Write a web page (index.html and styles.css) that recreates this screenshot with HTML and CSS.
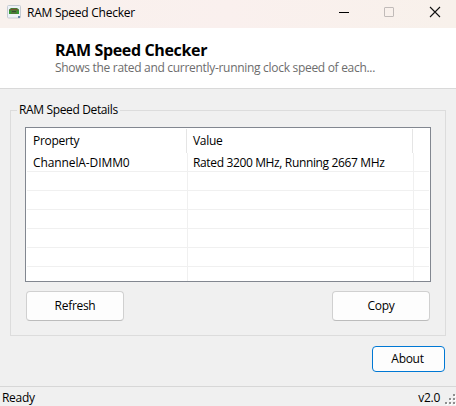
FILE: index.html
```html
<!DOCTYPE html>
<html lang="en">
<head>
    <meta charset="UTF-8">
    <meta name="viewport" content="width=device-width, initial-scale=1.0">
    <title>RAM Speed Checker</title>

    <link rel="stylesheet" href="styles.css">
</head>

<body>

    <div class="window">

        <div class="titlebar">
            <svg class="app-icon" width="14" height="14" viewBox="0 0 14 14">
                <rect x="0.5" y="0.5" width="13" height="12.5" rx="1" fill="#edf2f7" stroke="#c5cbd2"/>
                <path d="M2 4.5L4 3h6l2 1.5V9H2z" fill="#4c7a36"/>
                <path d="M2 6h2v3H2zM10 6h2v3h-2z" fill="#2f9a33"/>
                <path d="M4 4h6v1H4z" fill="#795331"/>
                <path d="M5 6h4v1H5z" fill="#334b35"/>
                <path d="M11 11h2v2h-2z" fill="#6687a8"/>
            </svg>
            <span class="titlebar-text">RAM Speed Checker</span>
            <div class="window-controls">
                <svg width="46" height="28" viewBox="0 0 46 28">
                    <path d="M18 12.5h10" stroke="#000"/>
                </svg>
                <svg width="46" height="28" viewBox="0 0 46 28">
                    <rect x="17.5" y="7.5" width="9" height="9" rx="0.5" fill="none" stroke="#c1bbb9"/>
                </svg>
                <svg width="43" height="28" viewBox="0 0 43 28">
                    <path d="M17 7l10 10M27 7L17 17" stroke="#111" stroke-width="1.1"/>
                </svg>
            </div>
        </div>

        <div class="header">
            <h1>RAM Speed Checker</h1>
            <p>Shows the rated and currently-running clock speed of each...</p>
        </div>

        <div class="content">
            <fieldset class="group">
                <legend>RAM Speed Details</legend>

                <div class="list">
                    <div class="row list-head">
                        <span class="property">Property</span>
                        <span class="value">Value</span>
                    </div>
                    <div class="row">
                        <span class="property dimm">ChannelA-DIMM0</span>
                        <span class="value speed">Rated 3200 MHz, Running 2667 MHz</span>
                    </div>
                    <div class="row"><span class="property"></span><span class="value"></span></div>
                    <div class="row"><span class="property"></span><span class="value"></span></div>
                    <div class="row"><span class="property"></span><span class="value"></span></div>
                    <div class="row"><span class="property"></span><span class="value"></span></div>
                    <div class="row"><span class="property"></span><span class="value"></span></div>
                    <div class="row last"><span class="property"></span><span class="value"></span></div>
                </div>

                <div class="buttons-container">
                    <button type="button">Refresh</button>
                    <button type="button">Copy</button>
                </div>
            </fieldset>

            <button type="button" class="about-btn">About</button>
        </div>

        <div class="statusbar">
            <span>Ready</span>
            <span class="version">v2.0</span>
            <!-- Resize grip -->
            <svg width="14" height="16" viewBox="0 0 14 16">
                <path d="M11 4h2v2h-2zM7 8h2v2H7zM11 8h2v2h-2zM3 12h2v2H3zM7 12h2v2H7zM11 12h2v2h-2z" fill="#fff" transform="translate(1 1)"/>
                <path d="M11 4h2v2h-2zM7 8h2v2H7zM11 8h2v2h-2zM3 12h2v2H3zM7 12h2v2H7zM11 12h2v2h-2z" fill="#8f8f8f"/>
            </svg>
        </div>

    </div>

</body>
</html>
```

FILE: styles.css
```css
* {
    box-sizing: border-box;
}

body {
    margin: 0;
    background-color: #f0f0f0;
    color: #000;
    font-family: 'Open Sans', 'Noto Sans', sans-serif;
    font-size: 12px;
    line-height: 16px;
    letter-spacing: -0.3px;
}

.window {
    display: flex;
    flex-direction: column;
    width: 456px;
    height: 406px;
    overflow: hidden;
    white-space: nowrap;
}

/* Title bar */
.titlebar {
    display: flex;
    height: 28px;
    padding-left: 7px;
    background: linear-gradient(90deg, #f8f1ed, #faf0ee 50%, #f8f1eb);
}

.app-icon {
    margin-top: 5px;
}

.titlebar-text {
    margin: 5px 0 0 6px;
    letter-spacing: -0.25px;
}

.window-controls {
    display: flex;
    margin-left: auto;
    height: 28px;
}

/* Heading */
.header {
    height: 61px;
    padding: 12px 0 0 55px;
    background-color: #fff;
    border-bottom: 1px solid #d9d9d9;
}

.header h1 {
    margin: 0;
    font-size: 16px;
    font-weight: bold;
    line-height: 20px;
    letter-spacing: -0.35px;
}

.header p {
    margin: 0;
    color: #6d6d6d;
}

/* Group box */
.content {
    display: flex;
    flex-direction: column;
    flex: 1;
    padding: 13px 10px 0;
}

.group {
    height: 234px;
    margin: 0;
    padding: 9px 14px 0;
    border: 1px solid #dcdcdc;
}

.group legend {
    height: 16px;
    margin-left: -8px;
    padding: 0 2px;
    letter-spacing: -0.36px;
}

/* Details list */
.list {
    height: 155px;
    padding: 1px;
    background-color: #fff;
    border: 1px solid #828790;
}

.row {
    display: flex;
    height: 19px;
    border-bottom: 1px solid #f0f0f0;
}

.row span {
    padding-top: 2px;
    padding-left: 6px;
    border-right: 1px solid #f0f0f0;
}

.row .property {
    width: 161px;
}

.row .value {
    width: 226px;
    padding-left: 5px;
}

.row .dimm {
    letter-spacing: -0.1px;
}

.row .speed {
    letter-spacing: -0.36px;
}

.list-head {
    height: 24px;
    border-bottom: none;
}

.list-head span {
    padding-top: 4px;
    border-color: #e5e5e5;
}

.list-head .property {
    width: 160px;
}

.list-head .value {
    padding-left: 6px;
}

.last {
    height: 14px;
    border-bottom: none;
}

/* Buttons */
.buttons-container {
    display: flex;
    justify-content: space-between;
    margin: 9px 1px 0;
}

button {
    width: 98px;
    height: 30px;
    padding: 0;
    background-color: #fdfdfd;
    border: 1px solid #d0d0d0;
    border-bottom-color: #bcbcbc;
    border-radius: 4px;
    color: #000;
    font: inherit;
    letter-spacing: inherit;
}

.about-btn {
    align-self: flex-end;
    width: 73px;
    height: 26px;
    margin: 10px 1px 0 0;
    padding-right: 2px;
    border-color: #0078d4;
}

/* Status bar */
.statusbar {
    display: flex;
    height: 20px;
    padding: 3px 0 0 2px;
    border-top: 1px solid #d7d7d7;
}

.version {
    margin-left: auto;
}

.statusbar svg {
    margin-left: 2px;
}
```
